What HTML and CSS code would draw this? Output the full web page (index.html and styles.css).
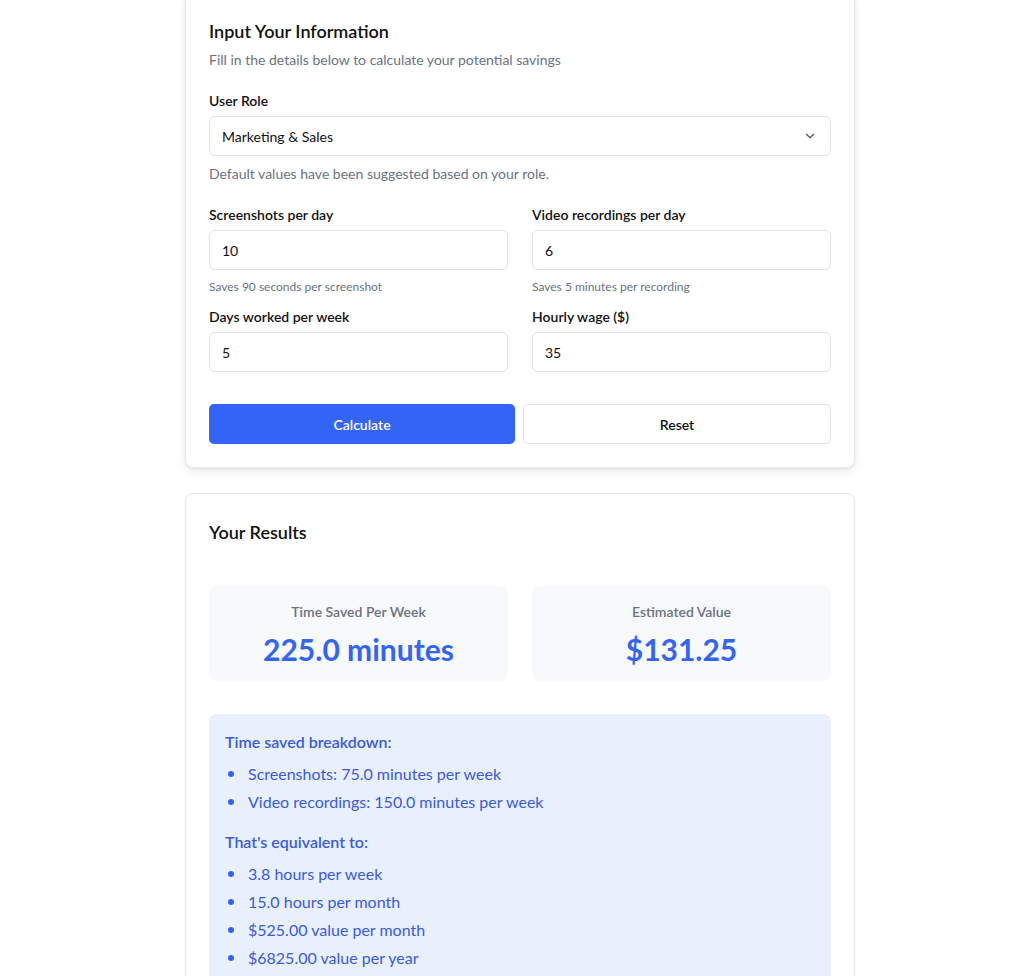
FILE: index.html
```html
<!DOCTYPE html>
<html lang="en">
<head>
  <meta charset="UTF-8" />
  <title>Savings Calculator</title>
  <link rel="stylesheet" href="styles.css">
</head>
<body>
  <div class="wrap">

    <!-- Formulaire -->
    <div class="card card-input">
      <h2>Input Your Information</h2>
      <p class="sub">Fill in the details below to calculate your potential savings</p>

      <div class="field">
        <label>User Role</label>
        <div class="select">
          <span>Marketing &amp; Sales</span>
          <svg width="14" height="14" viewBox="0 0 24 24" fill="none" stroke="#555" stroke-width="2" stroke-linecap="round" stroke-linejoin="round"><path d="M6 9l6 6 6-6"/></svg>
        </div>
        <p class="help">Default values have been suggested based on your role.</p>
      </div>

      <div class="grid">
        <div class="field">
          <label>Screenshots per day</label>
          <div class="input">10</div>
          <p class="hint">Saves 90 seconds per screenshot</p>
        </div>
        <div class="field">
          <label>Video recordings per day</label>
          <div class="input">6</div>
          <p class="hint">Saves 5 minutes per recording</p>
        </div>
        <div class="field">
          <label>Days worked per week</label>
          <div class="input">5</div>
        </div>
        <div class="field">
          <label>Hourly wage ($)</label>
          <div class="input">35</div>
        </div>
      </div>

      <div class="buttons">
        <button class="btn btn-primary">Calculate</button>
        <button class="btn btn-outline">Reset</button>
      </div>
    </div>

    <!-- Résultats -->
    <div class="card card-results">
      <h2>Your Results</h2>

      <div class="stats">
        <div class="stat">
          <div class="stat-label">Time Saved Per Week</div>
          <div class="stat-value">225.0 minutes</div>
        </div>
        <div class="stat">
          <div class="stat-label">Estimated Value</div>
          <div class="stat-value">$131.25</div>
        </div>
      </div>

      <div class="breakdown">
        <h3>Time saved breakdown:</h3>
        <ul>
          <li>Screenshots: 75.0 minutes per week</li>
          <li>Video recordings: 150.0 minutes per week</li>
        </ul>
        <h3>That's equivalent to:</h3>
        <ul>
          <li>3.8 hours per week</li>
          <li>15.0 hours per month</li>
          <li>$525.00 value per month</li>
          <li>$6825.00 value per year</li>
        </ul>
      </div>
    </div>

  </div>
</body>
</html>
```

FILE: styles.css
```css
* {
  box-sizing: border-box;
}

body {
  margin: 0;
  padding-left: 16px;
  background-color: #fff;
  color: #111;
  font-family: 'Lato', 'Noto Sans', sans-serif;
}

.wrap {
  width: 670px;
  margin: -8px auto 0;
  display: flex;
  flex-direction: column;
  gap: 25px;
}

.card {
  background: #fff;
  border: 1px solid #e5e7eb;
  border-radius: 8px;
  padding: 24px 23px 23px;
}

.card-input {
  box-shadow: 0 4px 8px rgba(0, 0, 0, 0.08), 0 1px 3px rgba(0, 0, 0, 0.06);
}

.card h2 {
  margin: 0;
  font-size: 18px;
  font-weight: 600;
  line-height: 28px;
}

.sub {
  margin: 5px 0 21px;
  font-size: 14px;
  color: #6b7280;
  line-height: 20px;
}

.field label {
  display: block;
  font-size: 14px;
  font-weight: 600;
  line-height: 20px;
  margin-bottom: 5px;
}

.select,
.input {
  height: 40px;
  border: 1px solid #e1e3e8;
  border-radius: 6px;
  padding: 0 12px;
  font-size: 14px;
  display: flex;
  align-items: center;
}

.select {
  justify-content: space-between;
}

.select svg {
  margin-right: 1px;
}

.help {
  margin: 8px 0 21px;
  font-size: 14px;
  line-height: 20px;
  color: #6b7280;
}

.grid {
  display: grid;
  grid-template-columns: 1fr 1fr;
  column-gap: 24px;
  row-gap: 0;
}

.hint {
  margin: 9px 0 0;
  font-size: 12px;
  line-height: 16px;
  color: #6b7280;
}

.grid .field:nth-child(n+3) {
  margin-top: 12px;
}

.buttons {
  display: flex;
  gap: 8px;
  margin-top: 32px;
}

.btn {
  flex: 1;
  height: 40px;
  border-radius: 5px;
  font-family: inherit;
  font-size: 14px;
  font-weight: 600;
  cursor: pointer;
}

.btn-primary {
  background: #3464f6;
  border: none;
  color: #fff;
}

.btn-outline {
  background: #fff;
  border: 1px solid #e1e3e8;
  color: #111;
}

.card-results {
  padding-bottom: 40px;
}

.stats {
  display: grid;
  grid-template-columns: 1fr 1fr;
  gap: 24px;
  margin-top: 40px;
}

.stat {
  background: #f8f9fb;
  border-radius: 8px;
  height: 95px;
  text-align: center;
  padding-top: 16px;
}

.stat-label {
  font-size: 14px;
  font-weight: 600;
  color: #6b7280;
  line-height: 20px;
}

.stat-value {
  margin-top: 9px;
  font-size: 30px;
  font-weight: 700;
  color: #3464f6;
  line-height: 36px;
}

.breakdown {
  margin-top: 33px;
  background: #e8effd;
  border-radius: 8px;
  padding: 16px 16px 24px;
  color: #3b5bdb;
}

.breakdown h3 {
  margin: 0;
  font-size: 16px;
  font-weight: 600;
  line-height: 24px;
}

.breakdown ul {
  margin: 6px 0 14px;
  padding: 0;
  list-style: none;
}

.breakdown li {
  display: flex;
  align-items: center;
  font-size: 16px;
  line-height: 28px;
}

.breakdown li::before {
  content: '';
  width: 6px;
  height: 6px;
  border-radius: 50%;
  background: #3464f6;
  margin: 0 14px 0 3px;
  flex-shrink: 0;
}
```
